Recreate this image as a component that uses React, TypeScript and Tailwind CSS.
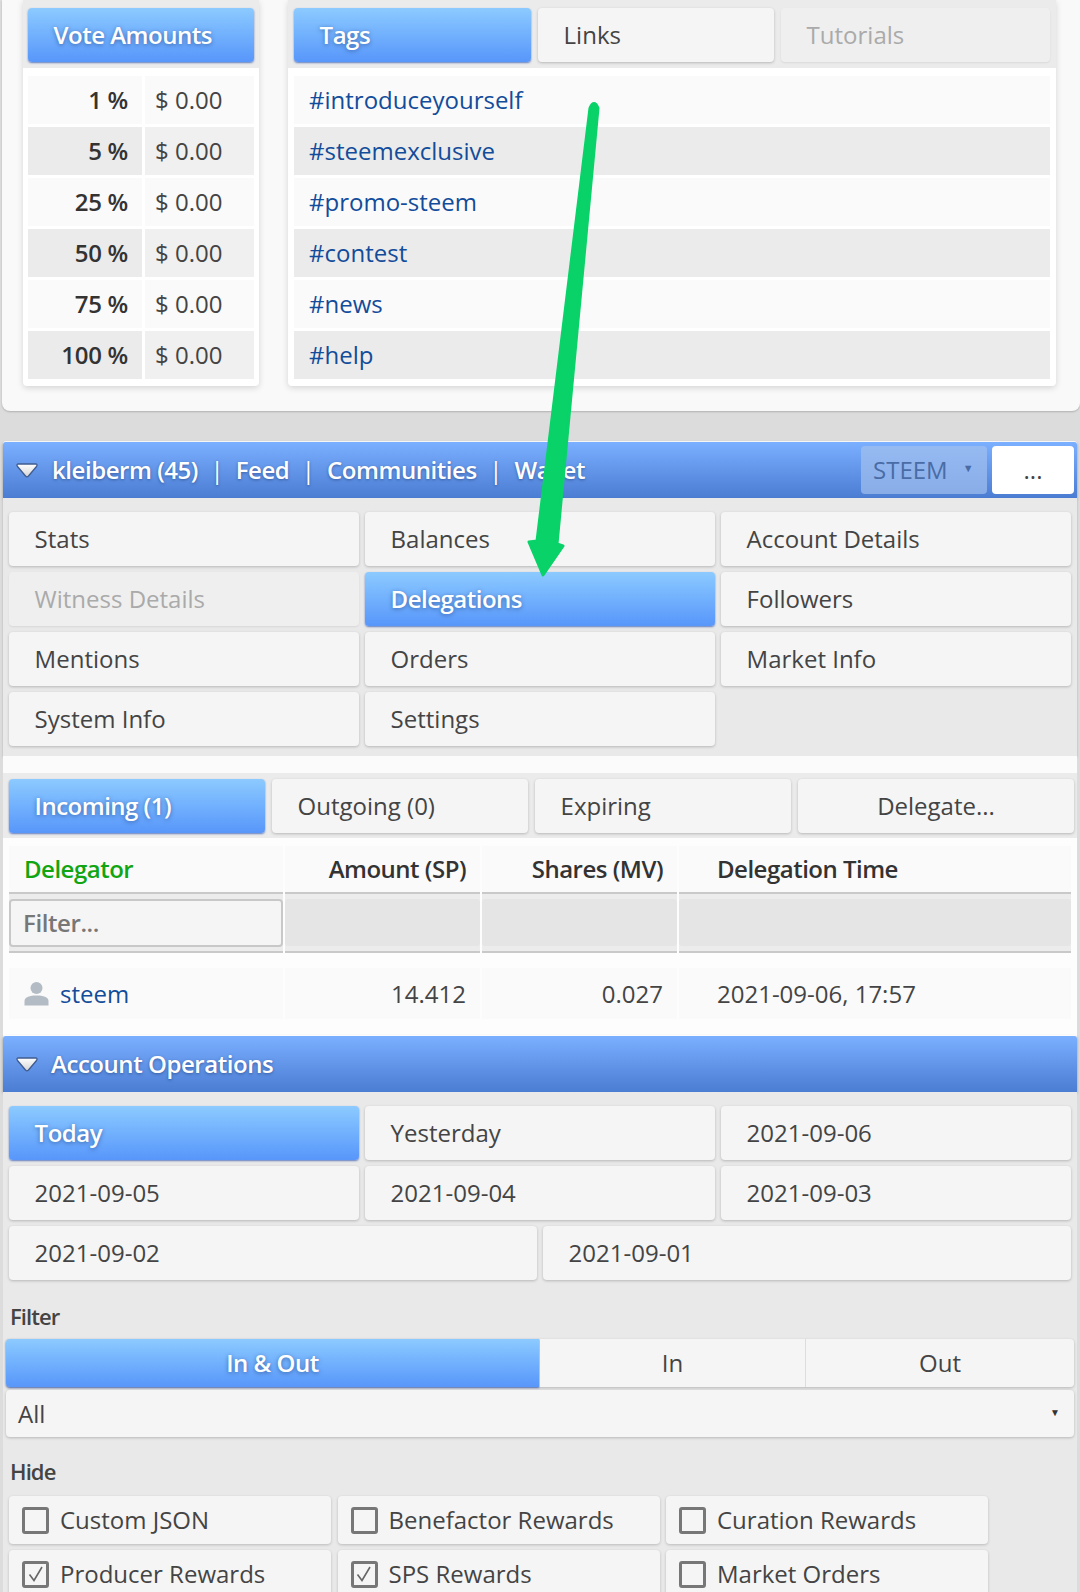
import React from 'react';

// shared button looks
const activeBtn = "bg-linear-to-b from-[#8ccaff] to-[#5896fa] text-white font-semibold tracking-[-0.5px] [text-shadow:0_1px_4px_rgba(30,60,120,0.6)] shadow-[0_1px_2px_rgba(40,80,170,0.7)]";
const plainBtn = "bg-[#f5f5f5] text-[#444] shadow-[0_1px_3px_rgba(0,0,0,0.22)]";
const dimBtn = "bg-[#efefef] text-[#aaa] shadow-[0_1px_2px_rgba(0,0,0,0.08)]";

const Btn: React.FC<{ label: string; active?: boolean; dim?: boolean; centered?: boolean; className?: string }> = ({ label, active, dim, centered, className }) => (
    <div className={`h-[54px] rounded-[4px] flex items-center ${centered ? 'justify-center' : 'pl-[25.6px]'} ${active ? activeBtn : dim ? dimBtn : plainBtn} ${className ?? ''}`}>
        {label}
    </div>
);

const Triangle: React.FC<{ id: string }> = ({ id }) => (
    <svg width="24" height="17" viewBox="0 0 24 17" className="shrink-0">
        <defs>
            <linearGradient id={id} x1="0" y1="0" x2="0" y2="1">
                <stop offset="0" stopColor="#ffffff" />
                <stop offset="1" stopColor="#d4d4d4" />
            </linearGradient>
        </defs>
        <path d="M3.5 2 H20.5 Q23 2 21.5 4.5 L13.5 14 Q12 15.8 10.5 14 L2.5 4.5 Q1 2 3.5 2 Z" fill={`url(#${id})`} stroke="#3f5c8f" strokeWidth="1.3" />
    </svg>
);

const Person = () => (
    <svg width="25" height="25" viewBox="0 0 25 25" className="shrink-0">
        <circle cx="12.5" cy="7" r="6" fill="#b3bcc4" />
        <path d="M0.5 24.5 V20 C0.5 16 6 14.5 12.5 14.5 C19 14.5 24.5 16 24.5 20 V24.5 Z" fill="#b3bcc4" />
    </svg>
);

const CheckCell: React.FC<{ label: string; checked?: boolean }> = ({ label, checked }) => (
    <div className="h-[48px] rounded-[4px] bg-[#f5f5f5] shadow-[0_1px_3px_rgba(0,0,0,0.2)] flex items-center pl-[13px] gap-[11px] text-[#444]">
        <div className="w-[27px] h-[27px] rounded-[3px] border-[3px] border-[#777] flex items-center justify-center shrink-0">
            {checked && (
                <svg width="20" height="20" viewBox="0 0 20 20">
                    <path d="M3.5 10.5 L8 16.5 L16 3" fill="none" stroke="#666" strokeWidth="1.6" />
                </svg>
            )}
        </div>
        {label}
    </div>
);

const voteRows = ['1 %', '5 %', '25 %', '50 %', '75 %', '100 %'];
const tagRows = ['#introduceyourself', '#steemexclusive', '#promo-steem', '#contest', '#news', '#help'];

const SectionBar: React.FC<{ children: React.ReactNode }> = ({ children }) => (
    <div className="h-[56px] mx-[3px] rounded-t-[3px] bg-linear-to-b from-[#7bafff] to-[#4b7dd3] shadow-[0_-1px_0_rgba(255,255,255,0.8),0_1px_3px_rgba(0,0,0,0.35)] flex items-center pl-[12px] text-white font-semibold tracking-[-0.45px] [text-shadow:0_1px_3px_rgba(20,40,90,0.5)]">
        {children}
    </div>
);

const App: React.FC = () => {
    return (
        <div className="relative w-[1080px] h-[1592px] overflow-hidden bg-[#dcdcdc] font-['Open_Sans',sans-serif] text-[24px] text-[#444]">
            {/* Top panel */}
            <div className="h-[411px] ml-[2px] rounded-b-[8px] bg-[#f9f9f9] shadow-[0_1px_2px_rgba(0,0,0,0.2)] flex pl-[21px] pr-[24px] gap-[29px]">
                <div className="w-[236px] h-[386px] rounded-b-[4px] bg-white shadow-[0_2px_6px_rgba(0,0,0,0.15)]">
                    <div className="h-[68px] bg-[#ebebeb] px-[5px] pt-[8px]">
                        <Btn label="Vote Amounts" active className="w-[226px]" />
                    </div>
                    <div className="pt-[8px] px-[5px] flex flex-col gap-[3px]">
                        {voteRows.map((pct, i) => (
                            <div key={pct} className="h-[48px] flex gap-[3px]">
                                <div className={`w-[114px] flex items-center justify-end pr-[14px] font-semibold text-[#333] tracking-[-0.3px] ${i % 2 ? 'bg-[#ebebeb]' : 'bg-[#fafafa]'}`}>{pct}</div>
                                <div className={`flex-1 flex items-center pl-[10px] ${i % 2 ? 'bg-[#f0f0f0]' : 'bg-[#fafafa]'}`}>$ 0.00</div>
                            </div>
                        ))}
                    </div>
                </div>
                <div className="w-[768px] h-[386px] rounded-b-[4px] bg-white shadow-[0_2px_6px_rgba(0,0,0,0.15)]">
                    <div className="h-[68px] bg-[#ebebeb] px-[6px] pt-[8px] flex gap-[7px]">
                        <Btn label="Tags" active className="w-[237px]" />
                        <Btn label="Links" className="w-[236px]" />
                        <Btn label="Tutorials" dim className="flex-1" />
                    </div>
                    <div className="pt-[8px] px-[6px] flex flex-col gap-[3px]">
                        {tagRows.map((tag, i) => (
                            <div key={tag} className={`h-[48px] flex items-center pl-[15px] text-[#124c9a] ${i % 2 ? 'bg-[#ebebeb]' : 'bg-[#fafafa]'}`}>{tag}</div>
                        ))}
                    </div>
                </div>
            </div>

            {/* Wallet section */}
            <div className="mt-[31px]">
                <SectionBar>
                    <Triangle id="tri-wallet" />
                    <span className="ml-[13px]">kleiberm (45)</span>
                    <span className="ml-[12.5px] font-normal">|</span>
                    <span className="ml-[12.5px]">Feed</span>
                    <span className="ml-[12.5px] font-normal">|</span>
                    <span className="ml-[12.5px]">Communities</span>
                    <span className="ml-[12.5px] font-normal">|</span>
                    <span className="ml-[12.5px]">Wallet</span>
                    <div className="ml-auto mr-[3px] flex gap-[5px]">
                        <div className="w-[126px] h-[48px] rounded-[4px] bg-[#a3c0ee]/70 flex items-center pl-[12px] text-[#4a6ca6] font-normal tracking-normal [text-shadow:none]">
                            STEEM
                            <span className="ml-[15px] text-[11px] -mt-[4px]">▼</span>
                        </div>
                        <div className="w-[82px] h-[48px] rounded-[4px] bg-white flex items-center justify-center text-[#444] font-normal tracking-normal [text-shadow:none]">...</div>
                    </div>
                </SectionBar>
                <div className="mx-[3px] h-[258px] bg-[#e9e9e9] shadow-[0_1px_2px_rgba(0,0,0,0.2)] px-[6px] pt-[14px] grid grid-cols-3 auto-rows-[54px] gap-[6px]">
                    <Btn label="Stats" />
                    <Btn label="Balances" />
                    <Btn label="Account Details" />
                    <Btn label="Witness Details" dim />
                    <Btn label="Delegations" active />
                    <Btn label="Followers" />
                    <Btn label="Mentions" />
                    <Btn label="Orders" />
                    <Btn label="Market Info" />
                    <Btn label="System Info" />
                    <Btn label="Settings" />
                </div>
                <div className="mx-[3px] h-[17px] bg-[#fbfbfb]" />

                {/* Delegations */}
                <div className="mx-[3px] bg-[#fdfdfd]">
                    <div className="h-[65px] bg-[#ebebeb] pl-[6px] pr-[3px] pt-[6px] flex gap-[7px]">
                        <Btn label="Incoming (1)" active className="w-[256px]" />
                        <Btn label="Outgoing (0)" className="w-[256px]" />
                        <Btn label="Expiring" className="w-[256px]" />
                        <Btn label="Delegate..." centered className="flex-1" />
                    </div>
                    <div className="px-[6px] pt-[8px] h-[198px]">
                        <div className="grid grid-cols-[274px_195px_195px_392px] gap-x-[2px]">
                            <div className="h-[46px] bg-[#fafafa] flex items-center pl-[15px] text-[#12a512] font-semibold tracking-[-0.5px]">Delegator</div>
                            <div className="h-[46px] bg-[#fafafa] flex items-center justify-end pr-[14px] text-[#333] font-semibold tracking-[-0.5px]">Amount (SP)</div>
                            <div className="h-[46px] bg-[#fafafa] flex items-center justify-end pr-[14px] text-[#333] font-semibold tracking-[-0.5px]">Shares (MV)</div>
                            <div className="h-[46px] bg-[#fafafa] flex items-center pl-[38px] text-[#333] font-semibold tracking-[-0.5px]">Delegation Time</div>
                            {[0, 1, 2, 3].map((n) => (
                                <div key={n} className="h-[61px] border-y-2 border-[#c9c9c9] bg-[#ececec] pt-[5px]">
                                    {n === 0 ? (
                                        <div className="w-full h-[48px] rounded-[4px] border-2 border-[#c8c8c8] bg-[#f5f5f5] flex items-center pl-[12px] font-semibold text-[#777] tracking-[-0.4px]">Filter...</div>
                                    ) : (
                                        <div className="w-full h-[47px] rounded-[3px] bg-[#e5e5e5]" />
                                    )}
                                </div>
                            ))}
                        </div>
                        <div className="mt-[15px] grid grid-cols-[274px_195px_195px_392px] gap-x-[2px] h-[51px]">
                            <div className="bg-[#fafafa] flex items-center pl-[15px] gap-[11px] text-[#124c9a]"><Person />steem</div>
                            <div className="bg-[#fafafa] flex items-center justify-end pr-[14px]">14.412</div>
                            <div className="bg-[#fafafa] flex items-center justify-end pr-[14px]">0.027</div>
                            <div className="bg-[#fafafa] flex items-center pl-[38px]">2021-09-06, 17:57</div>
                        </div>
                    </div>
                </div>

                {/* Account operations */}
                <SectionBar>
                    <Triangle id="tri-ops" />
                    <span className="ml-[12px]">Account Operations</span>
                </SectionBar>
                <div className="mx-[3px] h-[500px] bg-[#e9e9e9]">
                    <div className="px-[6px] pt-[14px] grid grid-cols-6 auto-rows-[54px] gap-[6px]">
                        <Btn label="Today" active className="col-span-2" />
                        <Btn label="Yesterday" className="col-span-2" />
                        <Btn label="2021-09-06" className="col-span-2" />
                        <Btn label="2021-09-05" className="col-span-2" />
                        <Btn label="2021-09-04" className="col-span-2" />
                        <Btn label="2021-09-03" className="col-span-2" />
                        <Btn label="2021-09-02" className="col-span-3" />
                        <Btn label="2021-09-01" className="col-span-3" />
                    </div>
                    <div className="h-[59px] flex items-end pb-[6px] pl-[7px] text-[22px] font-semibold tracking-[-0.9px] text-[#444]">Filter</div>
                    <div className="mx-[3px] h-[48px] flex gap-[1px] rounded-[4px] shadow-[0_1px_3px_rgba(0,0,0,0.22)] bg-[#ddd]">
                        <div className={`w-[533px] rounded-l-[4px] flex items-center justify-center ${activeBtn}`}>In &amp; Out</div>
                        <div className="flex-1 bg-[#f5f5f5] flex items-center justify-center">In</div>
                        <div className="w-[268px] rounded-r-[4px] bg-[#f5f5f5] flex items-center justify-center">Out</div>
                    </div>
                    <div className="mx-[3px] mt-[3px] h-[47px] rounded-[4px] bg-[#f5f5f5] shadow-[0_1px_3px_rgba(0,0,0,0.22)] flex items-center justify-between pl-[12px] pr-[14px]">
                        All
                        <span className="text-[10px] text-[#333] -mt-[3px]">▼</span>
                    </div>
                    <div className="h-[56px] flex items-end pb-[5px] pl-[7px] text-[22px] font-semibold tracking-[-0.9px] text-[#444]">Hide</div>
                    <div className="px-[6px] pt-[3px] grid grid-cols-[322px_322px_322px] gap-x-[6.5px] gap-y-[6px]">
                        <CheckCell label="Custom JSON" />
                        <CheckCell label="Benefactor Rewards" />
                        <CheckCell label="Curation Rewards" />
                        <CheckCell label="Producer Rewards" checked />
                        <CheckCell label="SPS Rewards" checked />
                        <CheckCell label="Market Orders" />
                    </div>
                </div>
            </div>

            {/* Green annotation arrow over the page */}
            <svg className="absolute left-0 top-0 pointer-events-none" width="1080" height="1592" viewBox="0 0 1080 1592">
                <path
                    d="M590 108 Q594 99 598 108 L557 544 L563 546 L543 575 L529 542 L537 541 Z"
                    fill="#08d268"
                    stroke="#08d268"
                    strokeWidth="3"
                    strokeLinejoin="round"
                />
            </svg>
        </div>
    );
};

export default App;
